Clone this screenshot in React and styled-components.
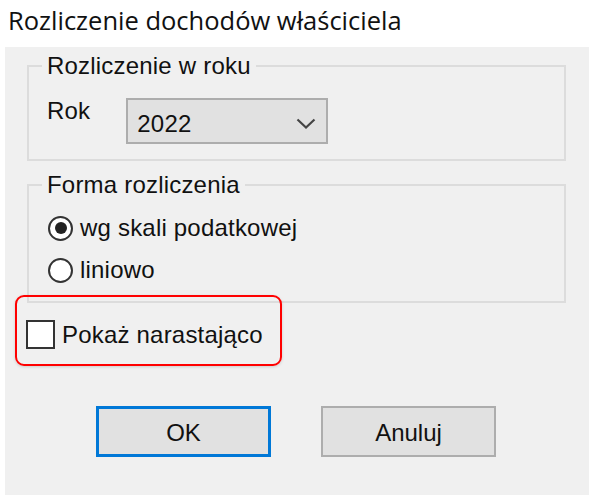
import React from "react";
import styled, { createGlobalStyle } from "styled-components";

const Global = createGlobalStyle`
  html, body { margin: 0; padding: 0; background: #ffffff; }
  body { width: 589px; height: 501px; overflow: hidden; }
`;

const Title = styled.div`
  height: 47px;
  box-sizing: border-box;
  padding: 3px 0 0 8px;
  font-family: "Open Sans", "Noto Sans", sans-serif;
  font-size: 25.5px;
  letter-spacing: 0;
  line-height: 34px;
  color: #111;
  white-space: nowrap;
`;

const Panel = styled.div`
  margin-left: 5px;
  height: 448px;
  box-sizing: border-box;
  background: #f0f0f0;
  padding: 6px 0 0 22px;
  font-family: "Liberation Sans", Arial, sans-serif;
  font-size: 24px;
  letter-spacing: 0.2px;
  color: #111;
`;

const Group = styled.fieldset`
  margin: 0 0 ${(p) => p.$gap || 0}px 0;
  width: 539px;
  height: ${(p) => p.$h}px;
  box-sizing: border-box;
  border: 2px solid #dcdcdc;
  padding: 0 0 0 13px;
`;

const Legend = styled.legend`
  padding: 0 5px;
  line-height: 26px;
`;

const YearRow = styled.div`
  display: flex;
  align-items: flex-start;
  gap: 36px;
  padding: 19px 0 0 5px;
`;

const Label = styled.span`
  line-height: 26px;
`;

const Select = styled.div`
  width: 202px;
  height: 46px;
  box-sizing: border-box;
  border: 2px solid #adadad;
  background: #e1e1e1;
  display: flex;
  align-items: center;
  justify-content: space-between;
  padding: 6px 10px 0 9px;
`;

const RadioList = styled.div`
  display: flex;
  flex-direction: column;
  gap: 14px;
  padding: 16px 0 0 6px;
`;

const Option = styled.label`
  display: flex;
  align-items: center;
  gap: 7px;
  line-height: 28px;
`;

const RadioDot = styled.span`
  width: 25px;
  height: 25px;
  box-sizing: border-box;
  border-radius: 50%;
  border: 2px solid #333;
  background: #fff;
  display: flex;
  align-items: center;
  justify-content: center;
  &::after {
    content: "";
    width: 12px;
    height: 12px;
    border-radius: 50%;
    background: ${(p) => (p.$on ? "#222" : "transparent")};
  }
`;

const CheckRow = styled.div`
  position: relative;
  display: flex;
  align-items: center;
  gap: 7px;
  margin: 17px 0 0 -1px;
  width: max-content;
`;

const Highlight = styled.span`
  position: absolute;
  left: -11px;
  right: -19px;
  top: -25px;
  bottom: -17px;
  border: 2px solid #f00;
  border-radius: 9px;
  box-shadow: 0 1px 3px rgba(0, 0, 0, 0.15);
  pointer-events: none;
`;

const CheckBox = styled.span`
  width: 29px;
  height: 29px;
  box-sizing: border-box;
  border: 2px solid #333;
  background: #fff;
`;

const Buttons = styled.div`
  display: flex;
  gap: 50px;
  margin: 57px 0 0 69px;
`;

const Button = styled.button`
  width: 175px;
  height: 51px;
  box-sizing: border-box;
  background: #e1e1e1;
  border: ${(p) => (p.$default ? "3px solid #0078d7" : "2px solid #adadad")};
  font-family: "Liberation Sans", Arial, sans-serif;
  font-size: 24px;
  color: #111;
  padding: 2px 0 0;
`;

function Chevron() {
  return (
    <svg width="20" height="12" viewBox="0 0 20 12">
      <polyline points="1.5,1.5 10,9.5 18.5,1.5" fill="none" stroke="#444" strokeWidth="2.2" />
    </svg>
  );
}

export default function App() {
  return (
    <>
      <Global />
      <Title>Rozliczenie dochodów właściciela</Title>
      <Panel>
        <Group $h={108} $gap={11}>
          <Legend>Rozliczenie w roku</Legend>
          <YearRow>
            <Label>Rok</Label>
            <Select>
              <span>2022</span>
              <Chevron />
            </Select>
          </YearRow>
        </Group>
        <Group $h={131}>
          <Legend>Forma rozliczenia</Legend>
          <RadioList>
            <Option>
              <RadioDot $on />
              wg skali podatkowej
            </Option>
            <Option>
              <RadioDot />
              liniowo
            </Option>
          </RadioList>
        </Group>
        <CheckRow>
          <Highlight />
          <CheckBox />
          Pokaż narastająco
        </CheckRow>
        <Buttons>
          <Button $default>OK</Button>
          <Button>Anuluj</Button>
        </Buttons>
      </Panel>
    </>
  );
}
